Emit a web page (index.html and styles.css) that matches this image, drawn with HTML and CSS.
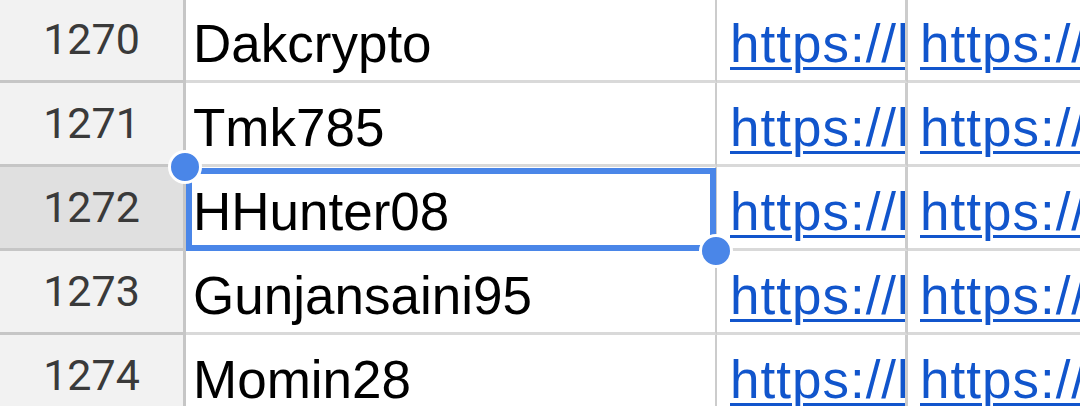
FILE: index.html
```html
<!DOCTYPE html>
<html>
<head>
<meta charset="utf-8">
<link rel="stylesheet" href="styles.css">
</head>
<body>
<div class="sheet">
  <div class="row">
    <div class="rh">1270</div>
    <div class="cell name">Dakcrypto</div>
    <div class="cell link c"><a>https://link</a></div>
    <div class="cell link d"><a>https://link</a></div>
  </div>
  <div class="row">
    <div class="rh">1271</div>
    <div class="cell name">Tmk785</div>
    <div class="cell link c"><a>https://link</a></div>
    <div class="cell link d"><a>https://link</a></div>
  </div>
  <div class="row current">
    <div class="rh sel">1272</div>
    <div class="cell name active">HHunter08
      <div class="selbox"></div>
      <div class="handle tl"></div>
      <div class="handle br"></div>
    </div>
    <div class="cell link c"><a>https://link</a></div>
    <div class="cell link d"><a>https://link</a></div>
  </div>
  <div class="row">
    <div class="rh">1273</div>
    <div class="cell name">Gunjansaini95</div>
    <div class="cell link c"><a>https://link</a></div>
    <div class="cell link d"><a>https://link</a></div>
  </div>
  <div class="row">
    <div class="rh">1274</div>
    <div class="cell name">Momin28</div>
    <div class="cell link c"><a>https://link</a></div>
    <div class="cell link d"><a>https://link</a></div>
  </div>
</div>
</body>
</html>
```
FILE: styles.css
```css
* { box-sizing: border-box; }
html, body { margin: 0; padding: 0; background: #fff; }
body { width: 1080px; height: 406px; overflow: hidden; }
.sheet { margin-top: -1px; }
.row {
  display: grid;
  grid-template-columns: 186px 531px 191px 1fr;
  height: 84px;
}
.rh {
  background: #f2f2f2;
  border-right: 3px solid #c6c6c6;
  border-bottom: 3px solid #c6c6c6;
  font-family: Roboto, "Liberation Sans", sans-serif;
  font-size: 43px;
  color: #3a3a3a;
  display: flex;
  align-items: center;
  justify-content: center;
  padding-bottom: 2px;
}
.rh.sel { background: #e0e0e0; }
.cell {
  border-bottom: 3px solid #d9d9d9;
  font-family: "Liberation Sans", Arial, sans-serif;
  font-size: 53px;
  color: #000;
  display: flex;
  align-items: center;
  white-space: nowrap;
  overflow: hidden;
  padding-top: 7px;
}
.name { border-right: 2px solid #cccccc; padding-left: 7px; }
.link.c { border-right: 3px solid #cccccc; padding-left: 13px; }
.link.d { padding-left: 12px; }
.link a {
  color: #1155cc;
  text-decoration: underline;
  text-decoration-thickness: 3px;
  text-underline-offset: 5px;
  letter-spacing: 1px;
}
.current { position: relative; z-index: 1; }
.active { position: relative; overflow: visible; }
.selbox {
  position: absolute;
  left: 0; top: 1px;
  width: 530px; height: 83px;
  border: 6px solid #4a86e8;
}
.handle {
  position: absolute;
  width: 34px; height: 34px;
  border-radius: 50%;
  background: #4a86e8;
  border: 3px solid #fff;
  z-index: 2;
}
.handle.tl { left: -18px; top: -17px; }
.handle.br { left: 513px; top: 67px; }
```
